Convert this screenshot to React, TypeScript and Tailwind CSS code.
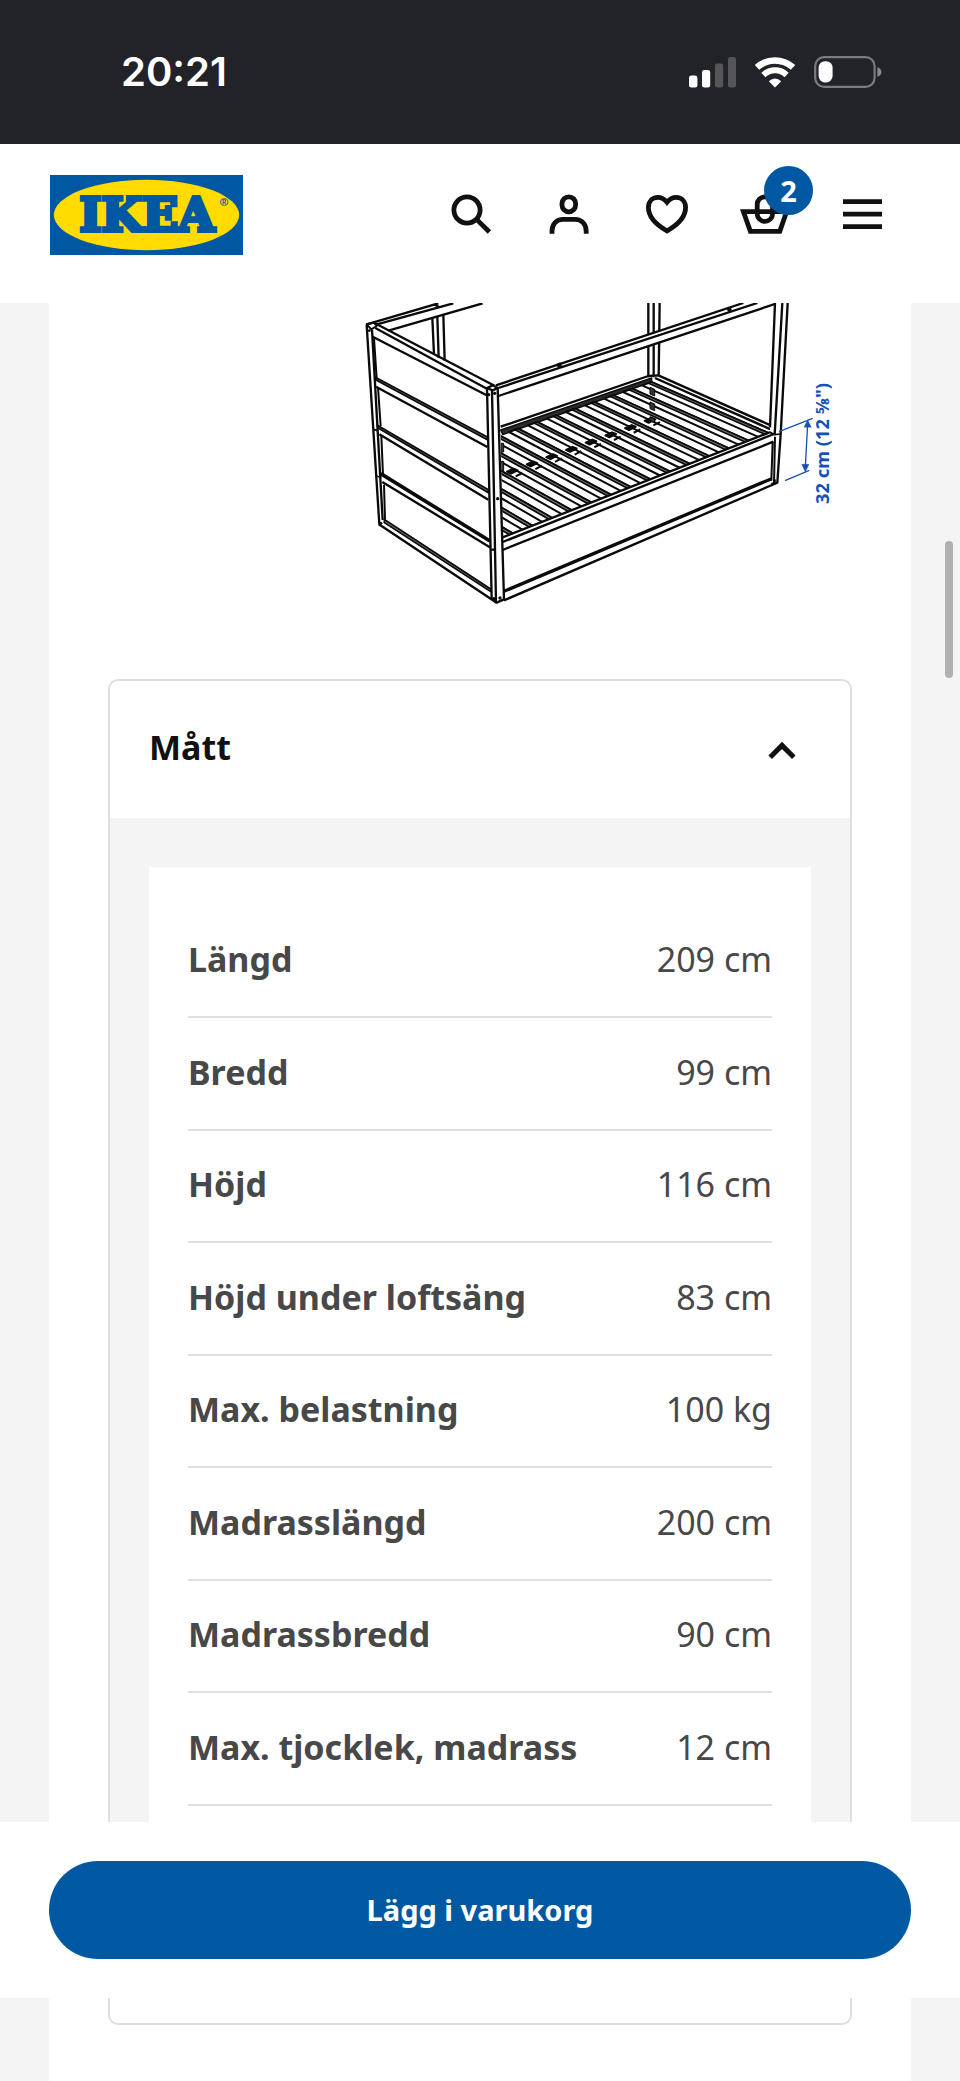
import { useState } from "react";
import type { ReactNode } from "react";

const MEASUREMENTS = [
  { label: "Längd", value: "209 cm" },
  { label: "Bredd", value: "99 cm" },
  { label: "Höjd", value: "116 cm" },
  { label: "Höjd under loftsäng", value: "83 cm" },
  { label: "Max. belastning", value: "100 kg" },
  { label: "Madrasslängd", value: "200 cm" },
  { label: "Madrassbredd", value: "90 cm" },
  { label: "Max. tjocklek, madrass", value: "12 cm" },
];

function StatusBar() {
  return (
    <div className="flex h-36 items-center justify-between bg-[#222329] pl-[121px] pr-[78px] text-white">
      <time className="font-['Inter',sans-serif] text-[40px] leading-none font-semibold">20:21</time>
      <div className="flex items-center gap-[19px]">
        <svg width="48" height="32" viewBox="0 0 48 32" fill="currentColor" aria-hidden="true">
          <rect x="1" y="19.6" width="8.4" height="12" rx="2.4" />
          <rect x="14" y="14" width="8.2" height="17.6" rx="2.4" />
          <rect x="27" y="7.6" width="8.2" height="24" rx="2.4" opacity="0.23" />
          <rect x="40" y="1" width="8" height="30.6" rx="2.4" opacity="0.23" />
        </svg>
        <svg width="40" height="32" viewBox="0 0 40 32" aria-hidden="true">
          <g fill="none" stroke="currentColor">
            <path d="M2 11.4A27 27 0 0 1 38 11.4" strokeWidth="6.6" />
            <path d="M8.4 19A16.8 16.8 0 0 1 31.6 19" strokeWidth="6" />
          </g>
          <path d="M20 31.4L13.8 25.3Q20 19.8 26.2 25.3Z" fill="currentColor" />
        </svg>
        <svg width="68" height="32" viewBox="0 0 68 32" aria-hidden="true">
          <rect x="1.2" y="1.2" width="59.4" height="29.6" rx="9" fill="none" stroke="#7b7b80" strokeWidth="2.2" />
          <path d="M63.4 11.2Q67.4 12.6 67.4 16Q67.4 19.4 63.4 20.8Z" fill="#8b8b90" />
          <rect x="4.6" y="5.2" width="14" height="21.2" rx="6.4" fill="currentColor" />
        </svg>
      </div>
    </div>
  );
}

function Logo() {
  return (
    <svg width="193" height="80" viewBox="0 0 193 80" role="img" aria-label="IKEA">
      <rect width="193" height="80" fill="#0058a3" />
      <ellipse cx="96.5" cy="40" rx="92.7" ry="35.2" fill="#ffdb00" />
      <text
        x="97"
        y="56"
        textAnchor="middle"
        className="font-['DejaVu_Serif',serif] text-[47px] font-bold"
        fill="#0058a3"
        stroke="#0058a3"
        strokeWidth="4"
      >
        IKEA
      </text>
      <text x="174" y="31" textAnchor="middle" className="font-['Noto_Sans',sans-serif] text-[11px] font-bold" fill="#0058a3">
        ®
      </text>
    </svg>
  );
}

function IconButton({ label, children }: { label: string; children: ReactNode }) {
  return (
    <button
      type="button"
      aria-label={label}
      className="relative flex size-[98px] items-center justify-center text-[#111111]"
    >
      {children}
    </button>
  );
}

function Icon({ children }: { children: ReactNode }) {
  return (
    <svg
      width="48"
      height="48"
      viewBox="0 0 48 48"
      fill="none"
      stroke="currentColor"
      strokeWidth="4.8"
      overflow="visible"
      aria-hidden="true"
    >
      {children}
    </svg>
  );
}

function Header() {
  return (
    <header className="flex h-[159px] items-start justify-between bg-white pr-[49px] pl-[50px]">
      <a href="#" className="mt-[31px]">
        <Logo />
      </a>
      <nav className="mt-[21px] flex">
        <IconButton label="Sök">
          <Icon>
            <circle cx="21" cy="20" r="13.1" />
            <path d="M30.6 29.4L43.4 42" />
          </Icon>
        </IconButton>
        <IconButton label="Logga in">
          <Icon>
            <rect x="18" y="6.8" width="13.6" height="15" rx="6.8" />
            <path d="M8 43.8V41C8 34 12.5 29.4 19 29.4H31C37.6 29.4 42.2 34 42.2 41V43.8" />
          </Icon>
        </IconButton>
        <IconButton label="Favoriter">
          <Icon>
            <path d="M25 12.2C22.2 8.8 19.2 7.4 15.8 7.4C10.2 7.4 6.4 11.6 6.4 17.6C6.4 27.2 14.5 35 25 41C35.5 35 43.6 27.2 43.6 17.6C43.6 11.6 39.8 7.4 34.2 7.4C30.8 7.4 27.8 8.8 25 12.2Z" />
          </Icon>
        </IconButton>
        <IconButton label="Varukorg">
          <Icon>
            <path d="M3.4 21.7H46.6L39.8 41.3H10.4Z" />
            <rect x="17.2" y="6.8" width="15.4" height="24.6" rx="7.7" />
          </Icon>
          <span className="absolute top-px right-0 flex size-[49px] items-center justify-center rounded-full bg-[#0058a3] text-[29px] leading-none font-bold text-white">
            2
          </span>
        </IconButton>
        <IconButton label="Meny">
          <Icon>
            <path d="M5 11.7H44M5 24.2H44M5 36.6H44" />
          </Icon>
        </IconButton>
      </nav>
    </header>
  );
}

const SLATS = Array.from({ length: 15 }, (_, k) => ({
  rear: [904 - 57 * k, 276 + 20 * k],
  front: [1258 - 59 * k, 430 + 23.2 * k],
}));

const BRACKETS = Array.from({ length: 8 }, (_, k) => [485 + 59 * k, 543 - 21.8 * k]);

function BedDrawing() {
  return (
    <svg width="500" height="312" viewBox="0 39 1500 936" role="img" aria-label="Måttskiss av säng">
      <defs>
        <clipPath id="bed-base">
          <path d="M452 425L905 262L1262 420V430L458 742Z" />
        </clipPath>
      </defs>

      <g fill="none" stroke="#0a0a0a" strokeWidth="7" strokeLinejoin="round">
        {/* rear rail and rear posts */}
        <path d="M50 103L265 40M78 104L310 40M115 122L398 40M255 44L268 52" />
        <path d="M247 84L252 194M262 80L266 204M280 74L284 212" />
        <path d="M895 39V262M911 39V262M929 39L926 258" />

        {/* rear side of the bed base */}
        <path d="M452 410L895 258L925 256L1262 406" />
        <path d="M452 420L905 264V276L458 434Z" fill="#2a2a2a" strokeWidth="4" />
        <path d="M915 264L1262 418" />

        {/* slats */}
        <g clipPath="url(#bed-base)" strokeWidth="6">
          {SLATS.map(({ rear, front }) => (
            <g key={rear[0]}>
              <path
                d={`M${rear[0]} ${rear[1]}L${front[0]} ${front[1]}L${front[0] - 30} ${front[1] + 12}L${rear[0] - 28} ${rear[1] + 10}Z`}
                fill="#ffffff"
              />
              <path
                d={`M${rear[0]} ${rear[1]}L${front[0]} ${front[1]}L${front[0] - 10} ${front[1] + 4}L${rear[0] - 10} ${rear[1] + 3}Z`}
                fill="#777777"
                strokeWidth="5"
              />
            </g>
          ))}
          {BRACKETS.map(([x, y]) => (
            <path
              key={x}
              d={`M${x - 14} ${y + 2}L${x + 6} ${y - 7}L${x + 18} ${y - 2}L${x - 2} ${y + 8}ZM${x + 12} ${y + 16}L${x + 32} ${y + 6}`}
              fill="#0a0a0a"
            />
          ))}
          <path d="M900 292L914 298V318L900 312ZM900 336L914 342V362L900 356ZM900 380L914 386V398L900 392Z" fill="#333333" strokeWidth="3" />
          <path d="M452 460H461V486H452ZM452 514H461V542H452Z" fill="#333333" strokeWidth="3" />
        </g>

        {/* front side of the bed base */}
        <path d="M458 742L1262 426L1272 432L458 756" fill="#ffffff" />
        <path d="M458 780L1270 455" />
        <path d="M462 904L1265 566" strokeWidth="10" />
        <path d="M462 931L1280 579" />

        {/* front top rail */}
        <path d="M440 285L1185 39L1285 39L445 317Z" fill="#ffffff" stroke="none" />
        <path d="M438 286L1180 39M445 294L1222 39M445 318L1284 39" />

        {/* right front post */}
        <path d="M1275 39L1260 407V428L1275 436L1292 432L1313 39Z" fill="#ffffff" stroke="none" />
        <path d="M1275 39L1260 412M1297 39L1274 434M1313 39L1292 432L1282 578L1264 582" />
        <path d="M1268 455L1264 572M1275 440L1272 582" strokeWidth="6" />
        <path d="M1260 426L1274 434L1292 432" strokeWidth="5" />

        {/* end panel */}
        <path d="M72 98L435 288M76 114L412 297M68 140L410 316" />
        <path d="M50 103L72 98L80 108L64 118Z" strokeWidth="6" />
        <path d="M50 105L88 703M66 120L98 690" />
        <path d="M72 145L80 264M84 292L92 408M94 438L99 554M102 584L105 688" strokeWidth="6" />
        <path d="M76 262L412 441L412 449L78 270Z" fill="#666666" strokeWidth="5" />
        <path d="M78 290L412 471" />
        <path d="M82 406L415 599L415 608L84 414Z" fill="#666666" strokeWidth="5" />
        <path d="M88 433L415 629" />
        <path d="M92 551L420 753" strokeWidth="11" />
        <path d="M97 576L432 779" />
        <path d="M103 688L422 897L422 905L103 698Z" fill="#666666" strokeWidth="5" />
        <path d="M86 703L98 710L440 938" />
        <path d="M70 418L84 422M78 558L94 562" strokeWidth="5" />

        {/* front corner post */}
        <path d="M411 294L425 925L440 938L462 928L443 294L428 286Z" fill="#ffffff" />
        <path d="M426 300L438 936M411 294L428 301L443 294" />
        <path d="M424 779H434" />
      </g>

      <g fill="#0a0a0a">
        <circle cx="416" cy="314" r="5" />
        <circle cx="434" cy="310" r="5" />
        <circle cx="443" cy="626" r="5" />
        <circle cx="450" cy="924" r="5" />
        <circle cx="431" cy="926" r="5" />
        <circle cx="92" cy="700" r="5" />
        <circle cx="58" cy="122" r="4" />
        <circle cx="1274" cy="572" r="4" />
        <path d="M619 222L631 217L636 229L624 234Z" />
        <path d="M1130 55L1142 51L1146 61L1134 66Z" />
      </g>

      {/* height of the bed base */}
      <g stroke="#1552b8" fill="#1552b8">
        <path d="M1287 425L1388 385M1305 572L1378 541M1373 400L1366 532" strokeWidth="4" fill="none" />
        <path d="M1373 390L1384 412H1362ZM1366 546L1355 523H1377Z" strokeWidth="1" />
      </g>
      <text
        transform="translate(1436 642) rotate(-90)"
        className="font-['Noto_Sans',sans-serif] text-[55px] font-bold"
        fill="#1552b8"
      >
        32 cm (12 ⅝")
      </text>
    </svg>
  );
}

function MeasurementCard() {
  const [open, setOpen] = useState(true);
  return (
    <section className="rounded-[10px] border-2 border-[#dfdfdf] bg-white">
      <h2>
        <button
          type="button"
          aria-expanded={open}
          onClick={() => setOpen(!open)}
          className="flex h-[137px] w-full items-center justify-between pr-11 pl-[39px] text-[34px] font-bold text-[#111111]"
        >
          <span className="pb-1">Mått</span>
          <svg
            width="48"
            height="48"
            viewBox="0 0 48 48"
            fill="none"
            stroke="currentColor"
            strokeWidth="5"
            className={open ? "" : "rotate-180"}
            aria-hidden="true"
          >
            <path d="M12.2 31.2L24 19.4L35.8 31.2" />
          </svg>
        </button>
      </h2>
      {open && (
        <div className="bg-[#f4f4f4] px-[39px] py-[49px]">
          <div className="bg-white px-[39px] py-[38px]">
            <table className="w-full border-collapse text-[34px] leading-[50px] text-[#484848]">
              <tbody>
                {MEASUREMENTS.map(({ label, value }) => (
                  <tr key={label} className="h-28 border-b-2 border-[#dfdfdf] even:h-[113px]">
                    <th scope="row" className="p-0 pb-1 text-left font-bold">
                      {label}
                    </th>
                    <td className="p-0 pb-1 text-right">{value}</td>
                  </tr>
                ))}
              </tbody>
            </table>
          </div>
        </div>
      )}
      <div className="h-[130px]" />
    </section>
  );
}

export default function App() {
  return (
    <div className="min-h-screen bg-[#f4f4f4] font-['Noto_Sans',sans-serif]">
      <StatusBar />
      <Header />
      <main className="mx-[49px] bg-white px-[59px] pb-14">
        <div className="flex h-[376px] justify-end pr-0.5">
          <BedDrawing />
        </div>
        <MeasurementCard />
      </main>
      <div className="fixed inset-x-0 bottom-[83px] bg-white px-[49px] py-[39px]">
        <button type="button" className="h-[98px] w-full rounded-full bg-[#0058a3] text-[29px] font-bold text-white">
          Lägg i varukorg
        </button>
      </div>
      <div className="fixed top-[541px] right-[7px] h-[137px] w-2 rounded-full bg-[#b0b0b0]" />
    </div>
  );
}
